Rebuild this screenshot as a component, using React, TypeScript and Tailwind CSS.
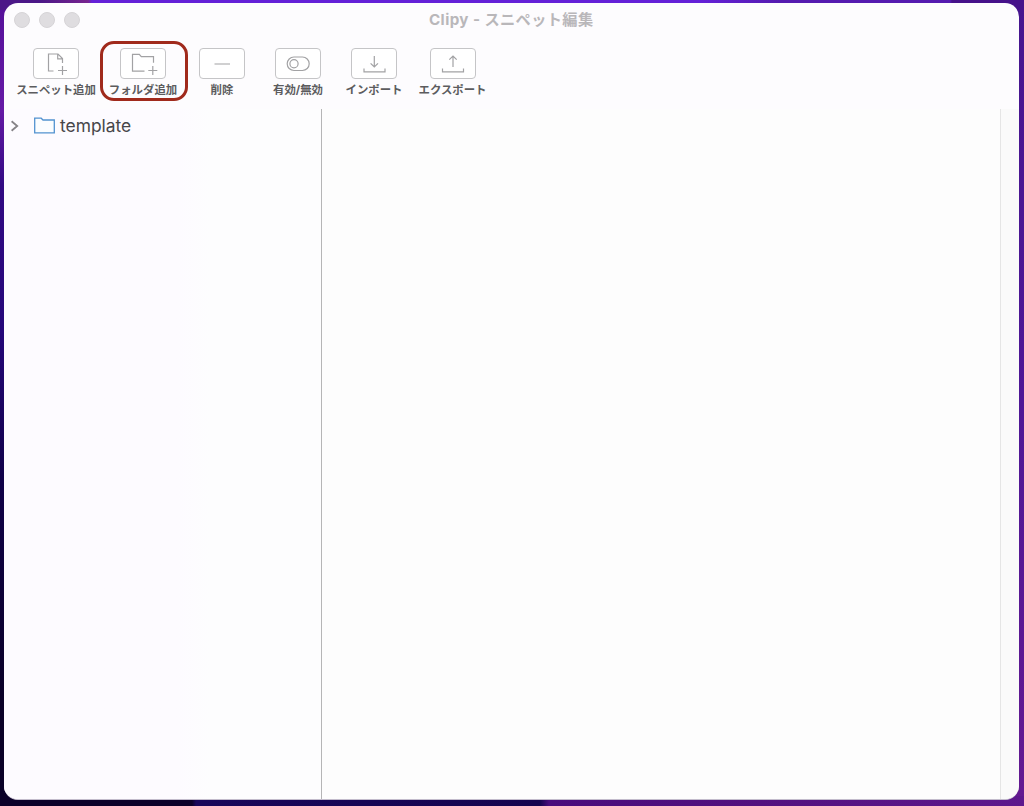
import type { ReactNode } from 'react';

const iconProps = {
    fill: 'none',
    stroke: '#a2a2a4',
    strokeWidth: 1.2,
    width: 46,
    height: 30,
    viewBox: '0 0 46 30',
};

const AddSnippetIcon = () => (
    <svg {...iconProps}>
        <path d="M20.5 22H15.5V5H25L29.5 9.5V14M24.7 5.3V9.8H29.3M29.5 17V26M25 21.5H34" />
    </svg>
);

const AddFolderIcon = () => (
    <svg {...iconProps}>
        <path d="M24.5 22.2H12.5V5.3H19.3L21.3 7.7H33.5V13.7M32.8 17V26M28.3 21.5H37.3" />
    </svg>
);

const RemoveIcon = () => (
    <svg {...iconProps}>
        <path d="M15.5 15H31" />
    </svg>
);

const ToggleIcon = () => (
    <svg {...iconProps}>
        <rect x="12.2" y="8" width="22" height="13.5" rx="6.75" />
        <circle cx="19" cy="14.7" r="4.1" />
    </svg>
);

const ImportIcon = () => (
    <svg {...iconProps}>
        <path d="M23.3 7V18M19.6 14.3L23.3 18L27 14.3M13 19.5V22.8H34V19.5" />
    </svg>
);

const ExportIcon = () => (
    <svg {...iconProps}>
        <path d="M23 18V7M19.3 10.7L23 7L26.7 10.7M12.5 19.5V22.8H33.5V19.5" />
    </svg>
);

type ToolItem = {
    label: string;
    icon: ReactNode;
    width: string;
    highlighted?: boolean;
};

const tools: ToolItem[] = [
    { label: 'スニペット追加', icon: <AddSnippetIcon />, width: 'w-[80px]' },
    { label: 'フォルダ追加', icon: <AddFolderIcon />, width: 'w-[94px]', highlighted: true },
    { label: '削除', icon: <RemoveIcon />, width: 'w-[64px]' },
    { label: '有効/無効', icon: <ToggleIcon />, width: 'w-[88px]' },
    { label: 'インポート', icon: <ImportIcon />, width: 'w-[64px]' },
    { label: 'エクスポート', icon: <ExportIcon />, width: 'w-[93px]' },
];

function ToolButton({ label, icon, width, highlighted }: ToolItem) {
    return (
        <div className={`relative flex shrink-0 flex-col items-center ${width}`}>
            <button className="flex h-[31px] w-[46px] items-center justify-center rounded-[4px] border border-[#c5c5c7] bg-white">
                <span className="-m-px shrink-0">{icon}</span>
            </button>
            <span className="mt-[3px] whitespace-nowrap text-[11.4px] leading-4 font-bold text-[#5c5c5e]">{label}</span>
            {highlighted && (
                <div className="pointer-events-none absolute top-[-7px] left-[4px] h-[60px] w-[88px] rounded-[14px] border-[3px] border-[#a02a1c]" />
            )}
        </div>
    );
}

function TitleBar() {
    return (
        <header className="grid h-[36px] shrink-0 grid-cols-[1fr_auto_1fr] items-center pb-[2px]">
            <div className="flex gap-[9px] pl-[9.5px]">
                <span className="h-4 w-4 rounded-full border border-[#d5d3d6] bg-[#dfdde0]" />
                <span className="h-4 w-4 rounded-full border border-[#d5d3d6] bg-[#dfdde0]" />
                <span className="h-4 w-4 rounded-full border border-[#d5d3d6] bg-[#dfdde0]" />
            </div>
            <h1 className="text-[15.2px] leading-5 font-bold tracking-[0.4px] whitespace-nowrap text-[#b9b7ba]">Clipy - スニペット編集</h1>
        </header>
    );
}

function Sidebar() {
    return (
        <aside className="w-[318px] shrink-0 border-r border-[#b5b5b6] bg-linear-to-r from-[#fdfbff] from-55% to-[#fdfdfe] to-65%">
            <div className="flex h-[34px] items-center pl-[6px]">
                <svg width="10" height="12" viewBox="0 0 10 12" fill="none" stroke="#858387" strokeWidth="1.8">
                    <path d="M1.6 1.3L7.2 6L1.6 10.7" />
                </svg>
                <svg className="ml-[13px]" width="23" height="18" viewBox="0 0 23 18" fill="#fbfdff" stroke="#5292d0" strokeWidth="1.3">
                    <path d="M1.7 15.8V1.2H8.2L10 3H21.3V15.8Z" />
                </svg>
                <span className="mt-px ml-[4px] text-[17.4px] leading-6 text-[#474649]">template</span>
            </div>
        </aside>
    );
}

export default function App() {
    return (
        <div className="h-[806px] w-[1024px] overflow-hidden bg-[linear-gradient(90deg,#4b1787_0_40px,#77248f_88px,#6420d8_92px_700px,#551bb0_780px_950px,#46128a_952px),linear-gradient(90deg,#0b0129_0_192px,#18065a_196px,#14044f_540px,#480b7c_549px,#52117f_760px,#5d188d),linear-gradient(180deg,#551099,#651aa5_110px,#320a83_185px,#25077a_330px,#100149_480px,#0a0128_700px),linear-gradient(180deg,#46158f,#4e1796_400px,#641991)] bg-[size:1024px_10px,1024px_10px,12px_806px,100%_100%] bg-[position:0_0,0_796px,0_0,0_0] bg-no-repeat pt-[2.5px] pl-[4px] font-[Inter,'Noto_Sans_CJK_JP',sans-serif]">
            <main className="flex h-[797px] w-[1014.5px] flex-col overflow-hidden rounded-[14px] border-b border-[#c3bccc] bg-[#fdfcfe]">
                <TitleBar />
                <nav className="flex h-[70px] shrink-0 pt-[9.5px] pl-[12px]">
                    {tools.map((tool) => (
                        <ToolButton key={tool.label} {...tool} />
                    ))}
                </nav>
                <div className="flex min-h-0 flex-1">
                    <Sidebar />
                    <section className="flex-1 bg-[#fdfdfd]" />
                    <div className="w-[18.5px] shrink-0 border-l border-[#e5e5e5] bg-[#fafafa]" />
                </div>
            </main>
        </div>
    );
}
